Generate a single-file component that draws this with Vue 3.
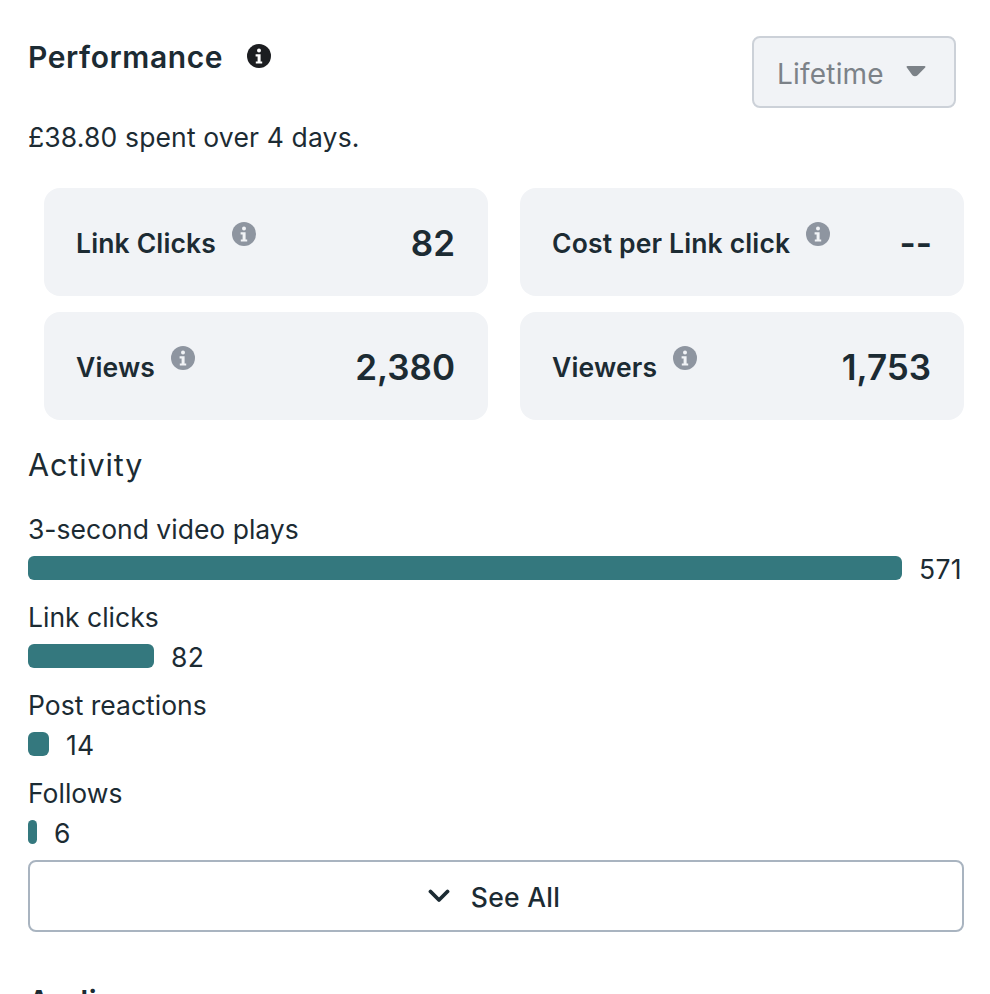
<script setup>
const cards = [
  { label: 'Link Clicks', value: '82' },
  { label: 'Cost per Link click', value: '--' },
  { label: 'Views', value: '2,380' },
  { label: 'Viewers', value: '1,753' },
]
const bars = [
  { label: '3-second video plays', value: '571', width: 874 },
  { label: 'Link clicks', value: '82', width: 126 },
  { label: 'Post reactions', value: '14', width: 21 },
  { label: 'Follows', value: '6', width: 9 },
]
</script>

<template>
  <main class="page">
    <header class="head">
      <div class="title-row">
        <h2 class="title">Performance</h2>
        <svg class="title-info" viewBox="0 0 24 24" width="24" height="24">
          <circle cx="12" cy="12" r="12" fill="#1c1e21" />
          <circle cx="12" cy="6.6" r="2" fill="#fff" />
          <path d="M8.6 10.2h5v7.2h1.6v2.2H8.8v-2.2h1.8v-5H8.6z" fill="#fff" />
        </svg>
      </div>
      <button class="select">
        <span>Lifetime</span>
        <svg viewBox="0 0 20 12" width="20" height="12">
          <path d="M1.5 1h17c.9 0 1.3 1 .7 1.6l-7.6 7.6c-1.4 1.4-3.8 1.4-5.2 0L.8 2.6C.2 2 .6 1 1.5 1z" fill="#7c8288" />
        </svg>
      </button>
    </header>
    <p class="spent">£38.80 spent over 4 days.</p>

    <section class="cards">
      <div v-for="c in cards" :key="c.label" class="card">
        <div class="card-label">
          <span>{{ c.label }}</span>
          <svg class="card-info" viewBox="0 0 24 24" width="24" height="24">
            <circle cx="12" cy="12" r="12" fill="#8e95a0" />
            <circle cx="12" cy="6.6" r="2" fill="#f1f3f6" />
            <path d="M8.6 10.2h5v7.2h1.6v2.2H8.8v-2.2h1.8v-5H8.6z" fill="#f1f3f6" />
          </svg>
        </div>
        <div class="card-value">{{ c.value }}</div>
      </div>
    </section>

    <h3 class="activity">Activity</h3>
    <div class="bars">
      <div v-for="b in bars" :key="b.label" class="bar-block">
        <div class="bar-label">{{ b.label }}</div>
        <div class="bar-row">
          <div class="bar" :style="{ width: b.width + 'px' }"></div>
          <span class="bar-value">{{ b.value }}</span>
        </div>
      </div>
    </div>

    <button class="see-all">
      <svg viewBox="0 0 22 14" width="22" height="14">
        <path d="M2.5 2.5 11 11l8.5-8.5" fill="none" stroke="#1c2b33" stroke-width="3.8" stroke-linecap="round" stroke-linejoin="round" />
      </svg>
      <span>See All</span>
    </button>

    <h2 class="audience">Audience</h2>
  </main>
</template>

<style>
html, body { margin: 0; background: #fff; overflow: hidden; }
</style>

<style scoped>
.page {
  box-sizing: border-box;
  width: 990px;
  height: 994px;
  overflow: hidden;
  padding: 36px 26px 0 28px;
  font-family: Inter, "Noto Sans", sans-serif;
  color: #1c2b33;
  font-size: 26.5px;
  letter-spacing: 0;
}
.head {
  display: flex;
  justify-content: space-between;
  align-items: flex-start;
  padding-right: 8px;
}
.title-row {
  display: flex;
  align-items: center;
  gap: 24px;
  height: 42px;
}
.title { margin: 0; font-size: 30px; font-weight: 600; line-height: 42px; letter-spacing: 0.6px; }
.title-info { margin-top: -2px; }
.select {
  box-sizing: border-box;
  width: 204px;
  height: 72px;
  display: flex;
  align-items: center;
  gap: 22px;
  padding: 4px 0 0 23px;
  background: #f1f3f6;
  border: 2px solid #ccd1d8;
  border-radius: 8px;
  color: #7c8288;
  font: inherit;
  font-size: 28px;
  letter-spacing: 0.2px;
}
.select svg { margin-top: -6px; }
.spent { margin: 11px 0 0; line-height: 36px; height: 36px; letter-spacing: 0.15px; }
.cards {
  display: grid;
  grid-template-columns: 444px 444px;
  gap: 16px 32px;
  margin: 33px 0 0 16px;
}
.card {
  box-sizing: border-box;
  height: 108px;
  display: flex;
  align-items: center;
  justify-content: space-between;
  padding: 2px 33px 0 32px;
  background: #f1f3f6;
  border-radius: 16px;
  font-weight: 600;
}
.card:nth-child(2) { padding-right: 32px; }
.card-label { display: flex; align-items: center; gap: 16px; font-size: 26.5px; letter-spacing: 0.15px; }
.card-info { margin-top: -18px; }
.card-value { font-size: 35px; font-weight: 600; letter-spacing: 0; }
.activity { margin: 25px 0 0; font-size: 30.5px; font-weight: 400; line-height: 40px; letter-spacing: 0.9px; }
.bars { margin-top: 27px; display: flex; flex-direction: column; }
.bar-block { height: 88px; }
.bar-label { height: 38px; line-height: 34px; }
.bar-row { display: flex; align-items: center; gap: 17px; height: 36px; }
.bar { height: 24px; background: #34787e; border-radius: 6px; }
.bar-value { margin-top: 2px; letter-spacing: 0.3px; }
.see-all {
  box-sizing: border-box;
  width: 936px;
  height: 72px;
  margin-top: -4px;
  display: flex;
  align-items: center;
  justify-content: center;
  gap: 21px;
  padding: 2px 0 0 2px;
  background: #fff;
  border: 2px solid #a9b4c0;
  border-radius: 8px;
  color: #1c2b33;
  font: inherit;
  font-weight: 500;
  letter-spacing: 0.3px;
}
.see-all svg { margin-left: -6px; margin-top: -2px; }
.audience { margin: 48px 0 0; font-size: 30px; font-weight: 600; line-height: 42px; letter-spacing: 0.6px; }
</style>
